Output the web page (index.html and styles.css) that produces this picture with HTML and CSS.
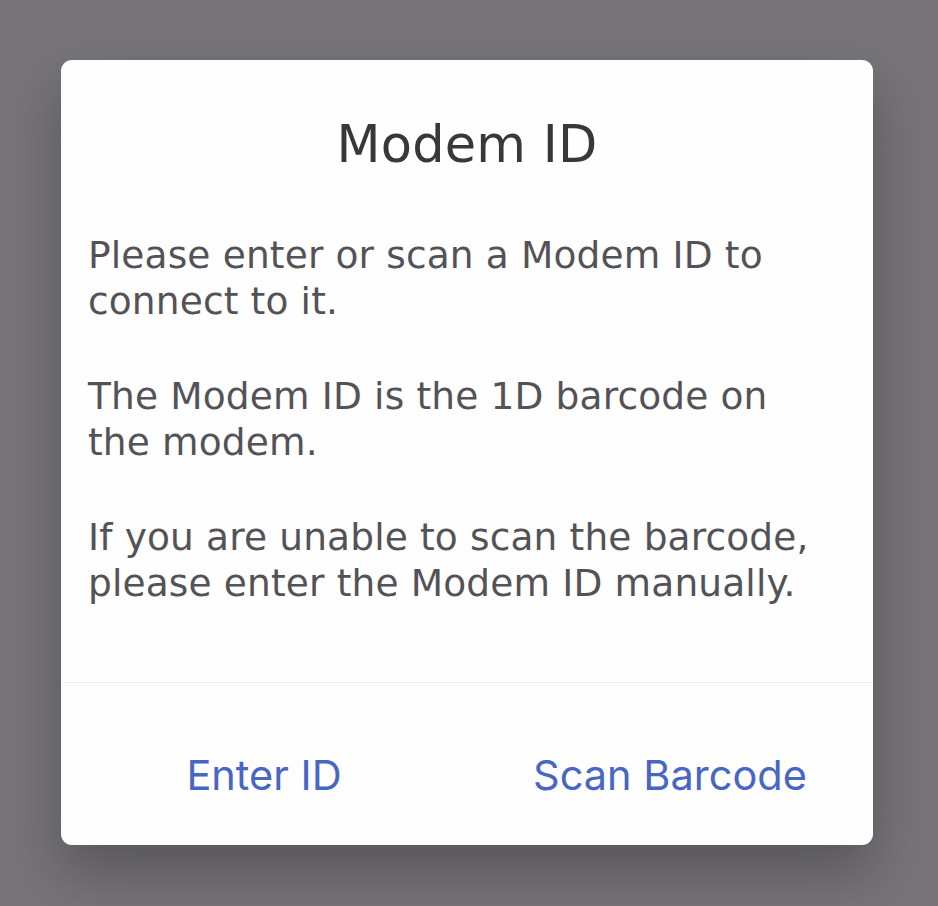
FILE: index.html
```html
<!DOCTYPE html>
<html lang="en">
<head>
<meta charset="utf-8">
<title>Modem ID</title>
<link rel="stylesheet" href="styles.css">
</head>
<body>
  <div class="dialog" role="dialog" aria-labelledby="dlg-title">
    <h1 class="dialog-title" id="dlg-title">Modem ID</h1>
    <div class="dialog-body">
      <p>Please enter or scan a Modem ID to<br>connect to it.</p>
      <p>The Modem ID is the 1D barcode on<br>the modem.</p>
      <p>If you are unable to scan the barcode,<br>please enter the Modem ID manually.</p>
    </div>
    <div class="dialog-actions">
      <button class="dialog-btn" type="button">Enter ID</button>
      <button class="dialog-btn" type="button">Scan Barcode</button>
    </div>
  </div>
</body>
</html>
```

FILE: styles.css
```css
html, body {
  margin: 0;
  padding: 0;
}

body {
  width: 938px;
  height: 906px;
  background: #767479;
  overflow: hidden;
  padding: 60px 0 0 61px;
  box-sizing: border-box;
}

.dialog {
  width: 812px;
  background: #fefefe;
  border-radius: 11px;
  box-shadow: 0 28px 56px rgba(0, 0, 0, 0.26);
  display: flex;
  flex-direction: column;
}

.dialog-title {
  margin: 0;
  padding-top: 55px;
  font-family: "DejaVu Sans", sans-serif;
  font-weight: normal;
  font-size: 51px;
  line-height: 60px;
  letter-spacing: 0.2px;
  color: #38383c;
  text-align: center;
}

.dialog-body {
  padding: 57px 25px 76px 27px;
  border-bottom: 1px solid #f0f0f0;
  display: flex;
  flex-direction: column;
  gap: 49px;
}

.dialog-body p {
  margin: 0;
  font-family: "DejaVu Sans", sans-serif;
  font-size: 37.5px;
  line-height: 46px;
  letter-spacing: 0.15px;
  color: #535357;
  white-space: nowrap;
}

.dialog-actions {
  display: grid;
  grid-template-columns: 1fr 1fr;
  padding: 67px 0 45px;
}

.dialog-btn {
  border: 0;
  background: none;
  padding: 0;
  margin: 0;
  font-family: "Inter", sans-serif;
  font-size: 41.5px;
  line-height: 50px;
  color: #4767c2;
  text-align: center;
  cursor: pointer;
}
```
